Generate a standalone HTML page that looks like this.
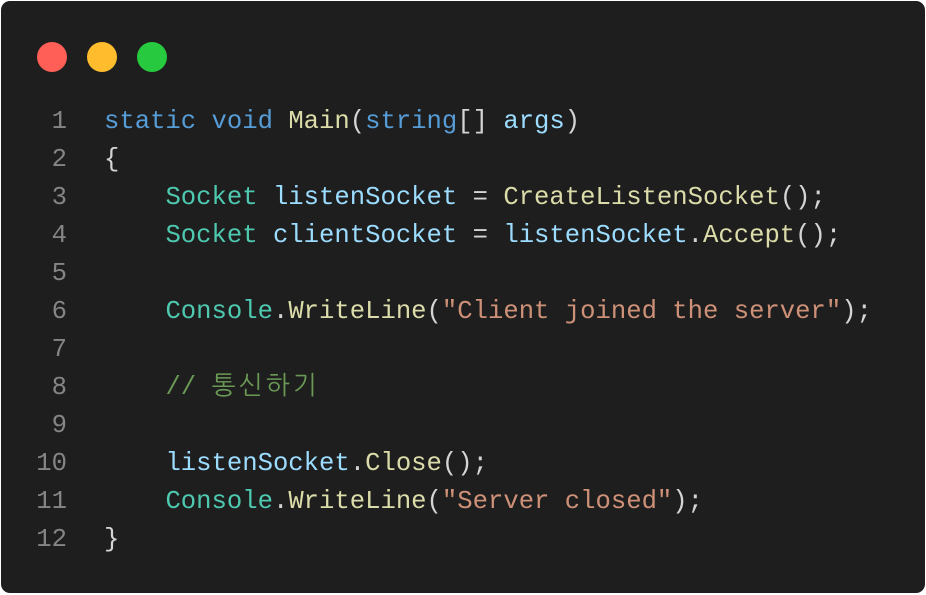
<!DOCTYPE html>
<html><head><meta charset="utf-8"><style>
html,body{margin:0;padding:0;background:#fff;}
.box{position:absolute;left:1px;top:1px;width:924px;height:592px;background:#1e1e1e;border-radius:9px;}
.dot{position:absolute;top:41px;width:30px;height:30px;border-radius:50%;}
.code{position:absolute;left:0;top:102px;font-family:"Liberation Mono","NanumGothic",monospace;font-size:25.6px;line-height:38px;white-space:pre;color:#d4d4d4;}
.ln{display:inline-block;width:66px;text-align:right;color:#858585;margin-right:37px;}
.k{color:#569cd6}.t{color:#4ec9b0}.f{color:#dcdcaa}.v{color:#9cdcfe}.s{color:#ce9178}.c{color:#6a9955}
.h{letter-spacing:3px}
</style></head><body>
<div class="box">
<div class="dot" style="left:36px;background:#ff5f56"></div>
<div class="dot" style="left:86px;background:#ffbd2e"></div>
<div class="dot" style="left:136px;background:#27c93f"></div>
<div class="code"><span class="ln">1</span><span class="k">static</span> <span class="k">void</span> <span class="f">Main</span>(<span class="k">string</span>[] <span class="v">args</span>)
<span class="ln">2</span>{
<span class="ln">3</span>    <span class="t">Socket</span> <span class="v">listenSocket</span> = <span class="f">CreateListenSocket</span>();
<span class="ln">4</span>    <span class="t">Socket</span> <span class="v">clientSocket</span> = <span class="v">listenSocket</span>.<span class="f">Accept</span>();
<span class="ln">5</span>
<span class="ln">6</span>    <span class="t">Console</span>.<span class="f">WriteLine</span>(<span class="s">"Client joined the server"</span>);
<span class="ln">7</span>
<span class="ln">8</span>    <span class="c">// <span class="h">통신하기</span></span>
<span class="ln">9</span>
<span class="ln">10</span>    <span class="v">listenSocket</span>.<span class="f">Close</span>();
<span class="ln">11</span>    <span class="t">Console</span>.<span class="f">WriteLine</span>(<span class="s">"Server closed"</span>);
<span class="ln">12</span>}</div>
</div>
</body></html>
